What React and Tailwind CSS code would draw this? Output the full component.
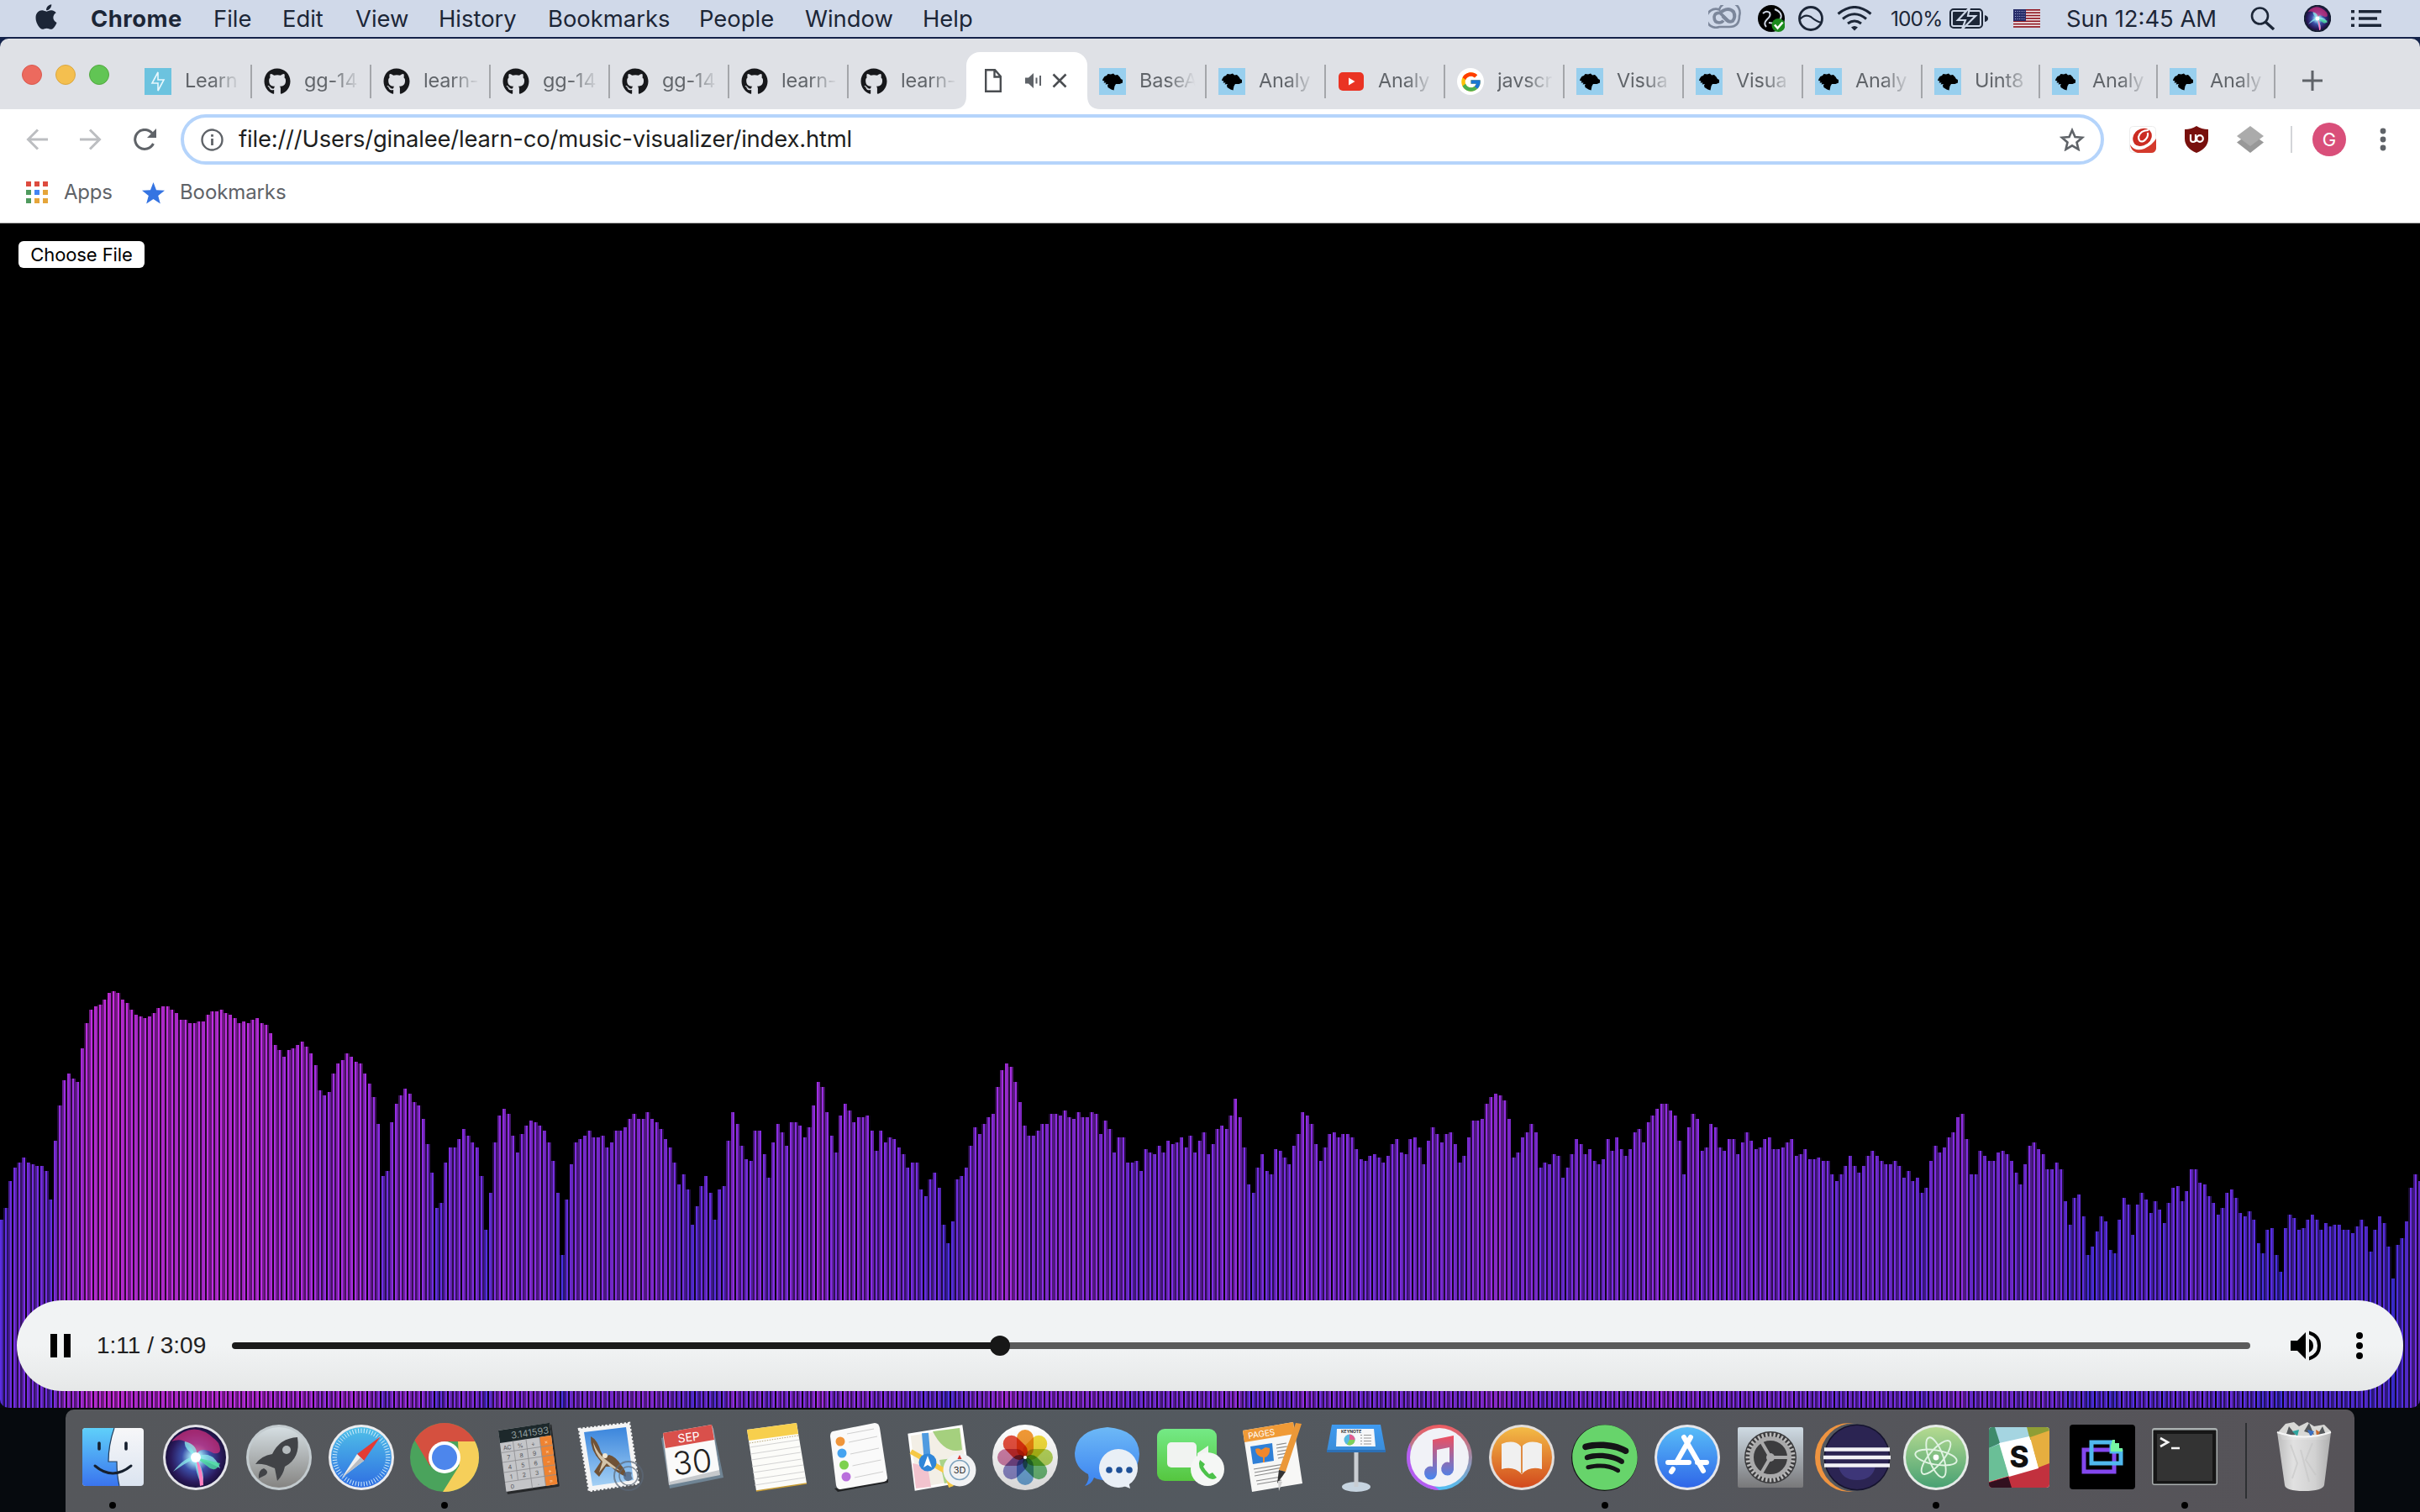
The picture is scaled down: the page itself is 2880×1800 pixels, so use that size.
import React from "react";
import { FaApple, FaGithub, FaSpotify } from "react-icons/fa";
import { FcGoogle } from "react-icons/fc";

/* Top edge of every frequency bar, measured in thirds of a pixel below the analyser's ceiling. */
const LEVELS = [
  876, 834, 738, 690, 673, 655, 673, 679, 685, 685, 703, 805, 595, 469, 379, 354, 373, 384, 264, 175,
  127, 115, 109, 91, 67, 61, 67, 91, 103, 127, 145, 151, 157, 151, 139, 121, 115, 115, 127, 139,
  163, 163, 175, 175, 169, 169, 145, 133, 133, 127, 139, 145, 157, 175, 169, 175, 163, 157, 175, 181,
  211, 253, 271, 295, 271, 265, 253, 241, 259, 283, 325, 415, 433, 421, 355, 319, 307, 283, 295, 313,
  319, 355, 391, 439, 535, 721, 703, 529, 463, 433, 409, 427, 457, 469, 517, 607, 709, 835, 817, 673,
  619, 619, 589, 553, 577, 601, 619, 721, 913, 781, 601, 505, 481, 499, 577, 637, 571, 541, 522, 529,
  541, 559, 601, 667, 781, 1003, 805, 679, 601, 589, 577, 559, 583, 583, 577, 619, 601, 559, 559, 547,
  517, 499, 517, 517, 493, 517, 529, 553, 589, 619, 673, 751, 715, 769, 895, 829, 757, 721, 781, 877,
  769, 757, 595, 493, 535, 613, 661, 667, 559, 559, 643, 727, 601, 535, 565, 613, 529, 529, 541, 583,
  547, 469, 385, 403, 493, 577, 637, 505, 463, 487, 529, 511, 511, 505, 559, 631, 559, 601, 583, 589,
  619, 643, 691, 673, 673, 769, 793, 733, 709, 763, 895, 961, 883, 733, 721, 691, 613, 547, 571, 535,
  511, 499, 403, 343, 319, 331, 385, 457, 541, 577, 577, 559, 535, 535, 499, 499, 505, 487, 511, 517,
  493, 511, 511, 493, 499, 571, 523, 553, 637, 583, 583, 673, 673, 667, 703, 625, 637, 643, 613, 637,
  595, 607, 601, 583, 619, 577, 637, 595, 565, 643, 607, 553, 541, 553, 505, 445, 511, 619, 751, 781,
  691, 643, 703, 715, 625, 631, 655, 679, 613, 571, 493, 505, 535, 607, 667, 619, 571, 565, 583, 571,
  571, 583, 625, 661, 667, 649, 643, 655, 673, 649, 607, 589, 637, 643, 589, 583, 619, 679, 595, 547,
  571, 601, 571, 565, 607, 673, 649, 583, 523, 523, 517, 463, 439, 427, 433, 451, 517, 655, 637, 583,
  565, 535, 565, 691, 673, 679, 643, 649, 727, 691, 643, 589, 607, 643, 625, 667, 679, 661, 589, 631,
  583, 625, 649, 625, 565, 553, 601, 529, 505, 481, 463, 463, 487, 505, 595, 715, 547, 499, 517, 631,
  619, 535, 547, 619, 631, 589, 589, 643, 601, 565, 595, 625, 619, 589, 583, 625, 625, 619, 601, 589,
  649, 643, 625, 661, 661, 655, 667, 667, 715, 739, 715, 685, 649, 685, 709, 685, 649, 631, 649, 667,
  679, 679, 667, 685, 727, 703, 739, 727, 781, 763, 667, 613, 637, 619, 583, 565, 511, 499, 589, 715,
  715, 631, 649, 667, 667, 637, 631, 643, 667, 709, 751, 679, 613, 601, 625, 643, 697, 697, 673, 697,
  811, 895, 799, 787, 865, 1003, 973, 919, 865, 883, 985, 997, 877, 799, 823, 931, 823, 781, 805, 853,
  811, 841, 889, 817, 763, 757, 811, 775, 697, 697, 745, 751, 793, 817, 859, 835, 781, 769, 799, 853,
  865, 847, 877, 961, 997, 913, 907, 1003, 1063, 907, 859, 871, 913, 907, 877, 859, 877, 913, 889, 901,
  895, 895, 913, 913, 925, 901, 877, 901, 991, 913, 865, 889, 973, 1087, 967, 943, 883, 763, 715, 739,
];

const PITCH = 2.67;
const BAR = 1.76;

function Waveform() {
  const rects = [];
  LEVELS.forEach((level, i) => {
    const top = Math.round(level / 3 - 19) / 2;
    const h = 248.5 - top;
    const start = i * PITCH;
    const end = start + BAR;
    for (let x = Math.floor(start); x < end; x++) {
      const cover = Math.min(end, x + 1) - Math.max(start, x);
      if (cover < 0.03) continue;
      rects.push(
        <rect
          key={`${i}-${x}`}
          x={x}
          y={top}
          width="1"
          height={h}
          fill={`rgb(${Math.round(h * 0.82)},46,226)`}
          fillOpacity={cover.toFixed(2)}
        />
      );
    }
  });
  return (
    <svg width="2880" height="497" viewBox="0 0 1440 248.5" shapeRendering="crispEdges" className="block">
      {rects}
    </svg>
  );
}

/* ---------- menu bar ---------- */

const MENUS = [
  ["File", "w-[82px]"],
  ["Edit", "w-[87px]"],
  ["View", "w-[99px]"],
  ["History", "w-[130px]"],
  ["Bookmarks", "w-[180px]"],
  ["People", "w-[126px]"],
  ["Window", "w-[140px]"],
  ["Help", "w-[100px]"],
];

function SiriArt({ id }) {
  return (
    <>
      <defs>
        <radialGradient id={id} cx="50%" cy="50%" r="55%">
          <stop offset="0" stopColor="#ffffff" />
          <stop offset=".16" stopColor="#9fe0f5" />
          <stop offset=".42" stopColor="#3b4fa8" />
          <stop offset=".75" stopColor="#2a1a5c" />
          <stop offset="1" stopColor="#120c30" />
        </radialGradient>
      </defs>
      <circle cx="49" cy="45" r="39" fill="#e3e3e8" />
      <circle cx="49" cy="45" r="36" fill={`url(#${id})`} />
      <path d="M20 26Q48-4 76 28Q82 42 70 40Q52 30 49 45Q40 18 20 26Z" fill="#d4307e" opacity=".7" />
      <path d="M22 62Q36 44 49 44Q34 34 36 26Q52 30 50 44Q70 36 78 58Q64 50 50 46Q62 66 56 78Q48 62 48 46Q36 52 22 62Z" fill="#8ff0ee" opacity=".75" />
      <path d="M49 46Q53 64 54 79L58 78Q58 60 50 46Z" fill="#ff7fc0" />
      <path d="M49 45L78 52Q74 62 66 58Z" fill="#4fe0a0" opacity=".8" />
      <circle cx="49" cy="45" r="6" fill="#fff" />
    </>
  );
}

function MenuBar() {
  return (
    <header className="flex h-11 items-center bg-[#d0d9e9] text-[27.4px] leading-[44px] text-[#1c2637]">
      <FaApple className="ml-[40px] mb-1 h-[34px] w-[30px] shrink-0" />
      <div className="ml-[38px] w-[146px] font-bold tracking-[0.5px]">Chrome</div>
      {MENUS.map(([label, width]) => (
        <div key={label} className={width}>
          {label}
        </div>
      ))}
      <div className="ml-auto flex h-full items-center">
        <svg width="39" height="28" viewBox="0 0 39 28" fill="none" stroke="#7c879b" className="mb-1">
          <path d="M13 5.500A12.500 12.500 0 0 1 37 13Q37 26 25 26H13A11 11 0 1 1 13 5.500Z" strokeWidth="2.600" />
          <path d="M25 20L14 9.500Q8 8.500 7 14Q7 21 13 21Q16 21 18 18.500" strokeWidth="3.600" />
          <path d="M14 9L18 6.500Q25 3 30 8Q33 14 29 19Q25 21 22 18L17 13" strokeWidth="4" />
        </svg>
        <svg width="32" height="32" viewBox="0 0 32 32" className="ml-[20px]">
          <circle cx="16" cy="16" r="16" fill="#000" />
          <path d="M6 10Q10 6 14 9Q16 13 11 17Q6 22 10 26M20 5Q30 9 27 16Q22 23 13 21" fill="none" stroke="#cfd6e4" strokeWidth="2" />
          <circle cx="24.500" cy="24" r="8" fill="#1b8a1e" />
          <path d="M20 23.500L23.500 27.500L29.500 20.500" fill="none" stroke="#fff" strokeWidth="2.600" />
        </svg>
        <svg width="30" height="30" viewBox="0 0 30 30" fill="none" stroke="#1c2637" strokeWidth="2.8" className="ml-[16px]">
          <circle cx="15" cy="15" r="13.500" />
          <path d="M2 16Q8 9 15 13Q22 19 28 20" strokeWidth="2.200" />
        </svg>
        <svg width="42" height="30" viewBox="0 0 42 30" fill="none" stroke="#1c2637" strokeWidth="3" className="ml-[16px]">
          <path d="M1.500 9.500Q21-6.500 40.500 9.500M7 15.500Q21 4 35 15.500M13 21Q21 15 29 21" />
          <path d="M17 25.500Q21 22.500 25 25.500L21 29.500Z" fill="#1c2637" stroke="none" />
        </svg>
        <span className="ml-[22px] w-[70px] text-[24.5px] tracking-[-0.9px]">100%</span>
        <svg width="46" height="24" viewBox="0 0 46 24" className="shrink-0 overflow-visible">
          <rect x="1" y="1" width="38" height="22" rx="4" fill="none" stroke="#1c2637" strokeWidth="2" />
          <rect x="4" y="4" width="32" height="16" rx="1" fill="#1c2637" />
          <path d="M42 8Q46 9 46 12T42 16Z" fill="#1c2637" />
          <path d="M24-1L10 14H19L15 25L31 9H22Z" fill="#1c2637" stroke="#d0d9e9" strokeWidth="2.200" />
        </svg>
        <svg width="32" height="22" viewBox="0 0 32 22" className="ml-[30px]">
          <rect width="32" height="22" fill="#f3eff2" />
          {[0, 1, 2, 3, 4, 5, 6].map((n) => (
            <rect key={n} y={n * 3.35} width="32" height="1.700" fill="#8f1420" />
          ))}
          <rect width="15" height="14" fill="#262c69" />
          {[2, 5, 8, 11].map((y) => (
            <path key={y} d={`M2 ${y + 0.5}H14`} stroke="#aab0d6" strokeDasharray="1 1.600" />
          ))}
        </svg>
        <span className="ml-[31px] w-[219px] whitespace-nowrap">Sun 12:45 AM</span>
        <svg width="30" height="28" viewBox="0 0 30 28" fill="none" stroke="#1c2637" className="shrink-0">
          <circle cx="11.500" cy="11" r="9.500" strokeWidth="2.600" />
          <path d="M18 18L28 27" strokeWidth="3.400" />
        </svg>
        <svg width="32" height="32" viewBox="10 6 78 78" className="ml-[34px]">
          <SiriArt id="siri-s" />
          <circle cx="49" cy="45" r="37" fill="none" stroke="#151d33" strokeWidth="5" />
        </svg>
        <svg width="36" height="20" viewBox="0 0 36 20" className="mr-[46px] ml-[24px]" fill="#1c2637">
          <path d="M0 0H4V3.500H0ZM0 8.200H4V11.700H0ZM0 16.500H4V20H0ZM9 0H36V3.500H9ZM9 8.200H31V11.700H9ZM9 16.500H36V20H9Z" />
        </svg>
      </div>
    </header>
  );
}

/* ---------- tab strip ---------- */

function Favicon({ kind }) {
  if (kind === "github") return <FaGithub className="h-8 w-8 shrink-0 text-[#17181b]" />;
  if (kind === "learn")
    return (
      <svg width="32" height="32" viewBox="0 0 32 32" className="shrink-0">
        <rect width="32" height="32" fill="#6cc3df" />
        <path d="M16 5L9 18H16V27L23 14H16Z" fill="none" stroke="#e8f8fd" strokeWidth="1.600" />
      </svg>
    );
  if (kind === "youtube")
    return (
      <svg width="32" height="32" viewBox="0 0 32 32" className="shrink-0">
        <rect x="1" y="5" width="30" height="22" rx="5" fill="#ea3323" />
        <path d="M13 11.500V20.500L20.500 16Z" fill="#fff" />
      </svg>
    );
  if (kind === "google")
    return (
      <span className="flex h-8 w-8 shrink-0 items-center justify-center rounded-full bg-white">
        <FcGoogle className="h-[27px] w-[27px]" />
      </span>
    );
  return (
    <svg width="32" height="32" viewBox="0 0 32 32" className="shrink-0">
      <rect width="32" height="32" fill="#98cfee" />
      <path d="M4.500 13L6.500 10L9 9L10.500 7L14 7.500L17 6.500L19 8.500L22 8L24.500 10.500L26 13L28 14V17.500L24.500 19L20 19L18.500 21.500L17.500 26.500L14.500 25.500L10.500 23L10 20.500L11 19L7.500 19.500L8.500 17.500L5.500 17.500L6.500 15.500L4 15Z" fill="#000" />
    </svg>
  );
}

function Tab({ kind, title, narrow, bare }) {
  return (
    <div className={`flex h-10 shrink-0 items-center ${narrow ? "w-[140px]" : "w-[142px]"} ${bare ? "" : "border-r-2 border-[#a4a6aa]"} pl-[14px]`}>
      <Favicon kind={kind} />
      <span className="mb-[2px] ml-[16px] w-[74px] shrink-0 bg-linear-to-r from-[#5f6368] from-45% to-[#5f636800] to-90% bg-clip-text text-[23.5px] leading-9 tracking-[-0.2px] whitespace-nowrap text-transparent">
        {title}
      </span>
    </div>
  );
}

const LEFT_TABS = [
  ["learn", "Learn"],
  ["github", "gg-14"],
  ["github", "learn-"],
  ["github", "gg-14"],
  ["github", "gg-14"],
  ["github", "learn-"],
  ["github", "learn-"],
];
const RIGHT_TABS = [
  ["mdn", "BaseA"],
  ["mdn", "Analy"],
  ["youtube", "Analy"],
  ["google", "javscr"],
  ["mdn", "Visua"],
  ["mdn", "Visua"],
  ["mdn", "Analy"],
  ["mdn", "Uint8"],
  ["mdn", "Analy"],
  ["mdn", "Analy"],
];

function TabStrip() {
  return (
    <div className="flex h-[84px] items-end rounded-t-[10px] bg-[#dfe1e6]">
      <div className="mb-[29px] ml-[26px] flex w-[132px] gap-4">
        <span className="h-6 w-6 rounded-full border border-[#d9584e] bg-[#ec6a5e]" />
        <span className="h-6 w-6 rounded-full border border-[#dba73f] bg-[#f4bf4f]" />
        <span className="h-6 w-6 rounded-full border border-[#52a83f] bg-[#61c554]" />
      </div>
      <div className="mb-[13px] flex">
        {LEFT_TABS.map(([kind, title], i) => (
          <Tab key={i} kind={kind} title={title} bare={i === 6} narrow={i === 6} />
        ))}
      </div>
      <div className="-ml-[16px] flex shrink-0 items-end">
        <svg width="16" height="16" viewBox="0 0 16 16">
          <path d="M16 0V16H0Q16 16 16 0Z" fill="#fff" />
        </svg>
        <div className="flex h-[68px] w-[144px] items-center rounded-t-[16px] bg-white pl-[22px]">
          <svg width="20" height="28" viewBox="0 0 20 28" fill="none" stroke="#4a4d51" strokeWidth="2.400">
            <path d="M1.200 1.200H12L18.800 9V26.800H1.200ZM11.500 1.200V9.500H18.800" />
          </svg>
          <svg width="20" height="18" viewBox="0 0 20 18" fill="#5f6368" className="ml-[28px]">
            <path d="M0 5.500H4L10 0V18L4 12.500H0ZM12.500 5.500H14.500V12.500H12.500ZM17 3H19V15H17Z" />
          </svg>
          <svg width="18" height="18" viewBox="0 0 18 18" stroke="#4a4d51" strokeWidth="2.600" className="ml-[12px]">
            <path d="M1.500 1.500L16.500 16.500M16.500 1.500L1.500 16.500" />
          </svg>
        </div>
        <svg width="16" height="16" viewBox="0 0 16 16">
          <path d="M0 0V16H16Q0 16 0 0Z" fill="#fff" />
        </svg>
      </div>
      <div className="mb-[13px] -ml-[16px] flex">
        {RIGHT_TABS.map(([kind, title], i) => (
          <Tab key={i} kind={kind} title={title} narrow={i > 6} />
        ))}
      </div>
      <svg width="24" height="24" viewBox="0 0 24 24" stroke="#5f6368" strokeWidth="3" className="mb-[22px] ml-[32px]">
        <path d="M12 0V24M0 12H24" />
      </svg>
    </div>
  );
}

/* ---------- toolbar ---------- */

function Toolbar() {
  return (
    <div className="flex h-[72px] items-center bg-white">
      <svg width="26" height="26" viewBox="0 0 26 26" fill="none" stroke="#bcbec1" strokeWidth="3" className="ml-[31px]">
        <path d="M26 13H2.500M14 1.500L2.500 13L14 24.500" />
      </svg>
      <svg width="26" height="26" viewBox="0 0 26 26" fill="none" stroke="#bcbec1" strokeWidth="3" className="ml-[38px]">
        <path d="M0 13H23.500M12 1.500L23.500 13L12 24.500" />
      </svg>
      <svg width="28" height="26" viewBox="0 0 28 26" fill="none" stroke="#5f6368" strokeWidth="3" className="ml-[38px]">
        <path d="M23.500 18A11.500 11.500 0 1 1 22 5.500" />
        <path d="M27 0V11H16Z" fill="#5f6368" stroke="none" />
      </svg>
      <div className="ml-[28px] flex h-[60px] w-[2289px] items-center rounded-full border-4 border-[#b5d4fb] bg-white pl-[20px]">
        <svg width="27" height="27" viewBox="0 0 27 27" fill="none" stroke="#5f6368" strokeWidth="2.400">
          <circle cx="13.500" cy="13.500" r="12" />
          <path d="M13.500 12V20M13.500 7V9.800" strokeWidth="2.800" />
        </svg>
        <span className="ml-[18px] text-[27.4px] tracking-[-0.17px] whitespace-nowrap text-[#1d1e20]">
          file:///Users/ginalee/learn-co/music-visualizer/index.html
        </span>
        <svg width="30" height="28" viewBox="0 0 30 28" fill="none" stroke="#5f6368" strokeWidth="2.600" className="mr-[19px] ml-auto">
          <path d="M15 3L18.500 11L27 11.800L20.500 17.400L22.500 25.800L15 21.300L7.500 25.800L9.500 17.400L3 11.800L11.500 11Z" />
        </svg>
      </div>
      <svg width="32" height="32" viewBox="0 0 32 32" className="ml-[30px]">
        <rect x=".5" y=".5" width="31" height="31" rx="4" fill="#fff" stroke="#ececec" />
        <path d="M1 22Q6 31 18 27Q28 22 32 15V27Q31 32 26 32H10Q2 30 1 22Z" fill="#d43a2c" />
        <ellipse cx="15.500" cy="13.500" rx="12" ry="10" transform="rotate(-38 15.500 13.500)" fill="#cb2c22" />
        <path d="M23 5Q13 5 11 13Q11 20 17 18Q23 14 22 8" fill="none" stroke="#fff" strokeWidth="2.200" />
        <path d="M3 20Q8 27 18 24Q27 20 31 12" fill="none" stroke="#fff" strokeWidth="2" />
      </svg>
      <svg width="28" height="32" viewBox="0 0 28 32" className="ml-[34px]">
        <path d="M14 0Q20 4 28 4V15Q28 26 14 32Q0 26 0 15V4Q8 4 14 0Z" fill="#78100d" />
        <path d="M7 10V16Q7 19 10 19T13 16V10M13 10V19" fill="none" stroke="#fff" strokeWidth="2.200" />
        <circle cx="18" cy="15" r="3.800" fill="none" stroke="#fff" strokeWidth="2.200" />
      </svg>
      <svg width="32" height="32" viewBox="0 0 32 32" className="ml-[34px]">
        <path d="M16 8L32 19.500L16 32L0 19.500Z" fill="#989898" />
        <path d="M16 0L32 12L16 24L0 12Z" fill="#ababab" />
      </svg>
      <span className="ml-[32px] h-8 w-[2px] bg-[#d3d5d8]" />
      <span className="ml-[24px] flex h-10 w-10 items-center justify-center rounded-full bg-[#d94f7a] text-[22px] text-white">G</span>
      <svg width="8" height="28" viewBox="0 0 8 28" fill="#5f6368" className="ml-[40px]">
        <circle cx="4" cy="4" r="3.400" />
        <circle cx="4" cy="14" r="3.400" />
        <circle cx="4" cy="24" r="3.400" />
      </svg>
    </div>
  );
}

const APP_DOTS = ["#dd4b3e", "#dd4b3e", "#dd4b3e", "#4f9a5e", "#4285f4", "#e5a53a", "#4f9a5e", "#e5a53a", "#e5a53a"];

function BookmarksBar() {
  return (
    <div className="flex h-[64px] items-start border-b border-[#a9a9a9] bg-white pt-[9px] text-[24px] leading-[36px] text-[#5f6368]">
      <div className="mt-[5px] ml-[31px] grid grid-cols-3 gap-[4px]">
        {APP_DOTS.map((c, i) => (
          <span key={i} className="h-[6px] w-[6px]" style={{ background: c }} />
        ))}
      </div>
      <span className="ml-[19px] w-[93px] tracking-[-0.2px]">Apps</span>
      <svg width="27" height="26" viewBox="0 0 27 26" className="mt-[6px]" fill="#3574e2">
        <path d="M13.500 0L17 9.200L27 9.700L19.200 16L21.800 25.500L13.500 20L5.200 25.500L7.800 16L0 9.700L10 9.200Z" />
      </svg>
      <span className="ml-[18px] tracking-[-0.1px]">Bookmarks</span>
    </div>
  );
}

/* ---------- page ---------- */

function Player() {
  return (
    <div className="absolute bottom-[20px] left-[20px] flex h-[108px] w-[2840px] items-center rounded-full bg-linear-to-b from-[#f1f3f4] from-50% to-[#e6e8e8]">
      <span className="ml-[40px] h-7 w-2 bg-black" />
      <span className="ml-[8px] h-7 w-2 bg-black" />
      <span className="ml-[31px] w-[161px] font-['Liberation_Sans',sans-serif] text-[28px] whitespace-nowrap text-[#202020]">1:11 / 3:09</span>
      <div className="relative flex h-6 w-[2402px] items-center">
        <span className="h-2 w-[914px] rounded-l-full bg-[#1a1a1a]" />
        <span className="h-2 flex-1 rounded-r-full bg-[#5b5b5b]" />
        <span className="absolute left-[902px] h-6 w-6 rounded-full bg-[#171717]" />
      </div>
      <svg width="36" height="36" viewBox="0 0 36 36" className="ml-[48px]">
        <path d="M0 12V24H8L18 34V2L8 12Z" fill="#000" />
        <path d="M22 10V26Q27 23.500 27 18T22 10ZM22 .600V4.800Q32 8 32 18T22 31.200V35.400Q36 31.500 36 18T22 .600Z" fill="#000" />
      </svg>
      <svg width="8" height="32" viewBox="0 0 8 32" className="ml-[42px]">
        <circle cx="4" cy="4" r="4" />
        <circle cx="4" cy="16" r="4" />
        <circle cx="4" cy="28" r="4" />
      </svg>
    </div>
  );
}

/* ---------- dock ---------- */

const grad = (id, a, b) => (
  <linearGradient id={id} x1="0" y1="0" x2="0" y2="1">
    <stop offset="0" stopColor={a} />
    <stop offset="1" stopColor={b} />
  </linearGradient>
);

const ticks = (cx, cy, r1, r2, n) =>
  Array.from({ length: n }, (_, i) => {
    const t = (i * 2 * Math.PI) / n;
    return `M${(cx + r1 * Math.cos(t)).toFixed(1)} ${(cy + r1 * Math.sin(t)).toFixed(1)}L${(cx + r2 * Math.cos(t)).toFixed(1)} ${(cy + r2 * Math.sin(t)).toFixed(1)}`;
  }).join("");

const PETALS = ["#f39a35", "#f2dc3c", "#b5d45b", "#6dbb78", "#6fa9da", "#8b88c8", "#cf7fa8", "#e5503e"];
const CALC = [["AC", "%", "÷", "×"], ["7", "8", "9", "×"], ["4", "5", "6", "−"], ["1", "2", "3", "+"], ["0", "", ".", "="]];

const ICONS = [
  <g key="finder">
    <defs>{grad("fa", "#5fd0fa", "#3a74ee")}{grad("fb", "#f7f7f9", "#dbe4f0")}</defs>
    <rect x="13" y="10" width="73" height="69" rx="4" fill="url(#fb)" />
    <path d="M17 10H51Q45 28 44 50H54Q54 66 57 79H17Q13 79 13 75V14Q13 10 17 10Z" fill="url(#fa)" />
    <path d="M51 10Q44 30 44 50H54Q54 66 57 79" fill="none" stroke="#25405e" strokeWidth="1.200" />
    <path d="M33 28V35M65 28V35" stroke="#16202e" strokeWidth="3.600" strokeLinecap="round" />
    <path d="M28 55Q49 73 71 55" fill="none" stroke="#16202e" strokeWidth="3" strokeLinecap="round" />
  </g>,
  <SiriArt key="siri" id="siri-l" />,
  <g key="launchpad">
    <defs>{grad("la", "#d5dee2", "#858482")}</defs>
    <circle cx="49" cy="45" r="39" fill="#c3cbcf" />
    <circle cx="49" cy="45" r="36" fill="url(#la)" />
    <path d="M71 21Q75 46 56 56Q54 66 47 73L44 58L34 54Q25 52 21 53Q28 43 41 41Q50 22 71 21Z" fill="#414347" />
    <circle cx="58" cy="36" r="5" fill="#b5bbbe" />
    <path d="M25 70Q24 60 31 58Q38 62 33 66Z" fill="#414347" />
  </g>,
  <g key="safari">
    <defs>{grad("sa", "#4fc0e8", "#2f6ee2")}</defs>
    <circle cx="49" cy="45" r="39" fill="#ececee" />
    <circle cx="49" cy="45" r="36" fill="url(#sa)" />
    <path d={ticks(49, 45, 29, 34.5, 60)} stroke="#d6eefb" strokeWidth="1" />
    <path d="M72 20L44 41L52 49Z" fill="#e33b34" />
    <path d="M26 69L44 41L52 49Z" fill="#f0f0f0" />
    <path d="M26 69L48 45L52 49Z" fill="#b8bcc2" />
  </g>,
  <g key="chrome">
    <circle cx="49" cy="45" r="41" fill="#4aa35c" />
    <path d="M13.500 24.500A41 41 0 0 1 84.500 24.500L85 26H49L31.500 55Z" fill="#d5503f" />
    <path d="M84.500 24.500A41 41 0 0 1 47 86L66.500 55L65 26H85Z" fill="#f6cf5a" />
    <circle cx="49" cy="45" r="19" fill="#fff" />
    <circle cx="49" cy="45" r="15" fill="#4d86ec" />
  </g>,
  <g key="calculator" transform="matrix(1 -.15 .13 1 14 13)">
    <rect x="1" y="2" width="62" height="74" rx="1" fill="#26282a" />
    <rect width="61" height="73" rx="1" fill="#c4c5c8" />
    <rect width="61" height="15" fill="#1d282b" />
    <rect x="47" y="15" width="14" height="58" fill="#ef8331" />
    <path d="M0 26.500H61M0 38H61M0 50H61M0 61.500H61M15.500 15V61.500M31 15V73M47 15V73" stroke="#8f8f92" strokeWidth=".8" />
    <text x="59" y="12" fontSize="11" textAnchor="end" fill="#8d9b9c">3.141593</text>
    {CALC.map((row, r) => row.map((c, k) => (
      <text key={`${r}${k}`} x={8 + k * 15.4} y={24 + r * 11.6} fontSize="7" textAnchor="middle" fill={k === 3 ? "#fbd2ae" : "#55565a"}>{c}</text>
    )))}
  </g>,
  <g key="mail">
    <defs>{grad("ma", "#3a85dc", "#a4d0f4")}</defs>
    <path d="M12 11L72 4L83 76L24 85Z" fill="#f5f5f5" stroke="#f5f5f5" strokeWidth="2.500" strokeDasharray="2.500 2" />
    <path d="M18 15L68 9L77 72L28 79Z" fill="url(#ma)" />
    <path d="M26 20Q34 24 38 38Q42 46 48 42Q56 44 62 54Q68 60 68 68Q58 64 50 56L44 56L36 68L30 62L38 50Q25 36 26 20Z" fill="#6f5236" />
    <path d="M29 27Q34 40 43 47L61 61Q50 58 45 52L36 63L40 50Q30 40 29 27Z" fill="#d3c3a8" />
    <circle cx="43" cy="43" r="3" fill="#f0e6d2" />
    <circle cx="71" cy="67" r="17" fill="none" stroke="#5b6878" strokeWidth="2" opacity=".7" />
    <circle cx="71" cy="67" r="11" fill="none" stroke="#5b6878" strokeWidth="1.500" opacity=".7" />
    <path d="M66 63Q71 61 75 63Q73 67 76 70Q71 76 66 71Q64 67 66 63Z" fill="#4f6380" opacity=".8" />
  </g>,
  <g key="calendar">
    <path d="M11 22L73 10L85 69L21 82Z" fill="#6f8494" />
    <path d="M13 20L72 8L81 66L20 78Z" fill="#c6c9cc" />
    <path d="M13 16L71 6L80 60L21 74Z" fill="#fafafa" />
    <path d="M13 16L71 6L74 24L16 34Z" fill="#d9504b" />
    <text x="44" y="26" fontSize="14" textAnchor="middle" fill="#fff" transform="rotate(-8 44 24)">SEP</text>
    <text x="48" y="64" fontSize="38" fontWeight="300" textAnchor="middle" fill="#222" transform="rotate(-6 48 50)">30</text>
  </g>,
  <g key="notes">
    <path d="M15 12L74 4L86 76L26 85Z" fill="#fcfcf9" />
    <path d="M26 85L86 76" stroke="#c99d33" strokeWidth="1.500" />
    <path d="M15 12L74 4L76 17L17 25Z" fill="#f7cf4d" />
    <path d="M18 33L77 24M19 41L78 32M20 48L79 39M21 56L80 47M22 63L82 54M23 71L83 62M24 78L84 69" stroke="#d3d3d3" />
    <path d="M18 28L76 19" stroke="#b8a678" strokeDasharray="1.500 1.500" />
  </g>,
  <g key="reminders">
    <path d="M20 82L84 71L84 75L24 86Z" fill="#222426" />
    <path d="M18 14L68 4Q73 4 74 10L83 69Q83 73 79 74L27 83Q23 83 22 78L15 20Q15 15 18 14Z" fill="#fafafa" />
    {[["#f0953a", 27, 30], ["#45a3f0", 29, 44], ["#7dd14e", 31.5, 58], ["#b96fdc", 34, 72]].map(([c, x, y]) => (
      <g key={c}>
        <circle cx={x} cy={y - 4} r="5.500" fill={c} />
        <path d={`M${x + 10} ${y - 3}L${x + 44} ${y - 10}`} stroke="#cfcfcf" />
      </g>
    ))}
    <path d="M35 17L67 11" stroke="#cfcfcf" />
  </g>,
  <g key="maps">
    <path d="M10 18L72 8L81 72L18 83Z" fill="#f3efe6" stroke="#fff" strokeWidth="3" />
    <path d="M38 14L70 10L73 36Q52 42 38 14Z" fill="#a5d07e" />
    <path d="M46 48L78 44L80 70L52 76Z" fill="#a9d389" />
    <path d="M12 38L54 62L60 80" fill="none" stroke="#f6c945" strokeWidth="6" />
    <path d="M14 52L32 56L36 80L18 82Z" fill="#f2c3ce" />
    <path d="M29 16L32 51" stroke="#4f9be0" strokeWidth="8" />
    <circle cx="32" cy="51" r="10.500" fill="#2f86d9" />
    <path d="M32 43L37 57L32 54L27 57Z" fill="#fff" />
    <circle cx="70" cy="60" r="19.500" fill="#f1f2f3" />
    <circle cx="70" cy="60" r="11.500" fill="none" stroke="#7ba0bc" strokeWidth="1.500" />
    <text x="70" y="64" fontSize="11" textAnchor="middle" fill="#333">3D</text>
    <path d="M67.500 47L70 42L72.500 47Z" fill="#d93630" />
  </g>,
  <g key="photos" className="isolate">
    <defs>{grad("ph", "#ffffff", "#d6d6d6")}</defs>
    <circle cx="50" cy="45" r="39" fill="url(#ph)" />
    {PETALS.map((c, i) => (
      <rect key={c} x="40" y="12" width="20" height="33" rx="10" fill={c} className="mix-blend-multiply" transform={`rotate(${i * 45} 50 45)`} />
    ))}
    <circle cx="50" cy="45" r="2" fill="#fff" />
  </g>,
  <g key="messages">
    <defs>{grad("me", "#6db9f7", "#3b82f0")}</defs>
    <path d="M49 9Q86 12 87 41Q86 70 52 73Q38 72 33 69Q30 77 22 79Q28 72 26 65Q10 57 10 40Q12 12 49 9Z" fill="url(#me)" />
    <circle cx="62" cy="60" r="23" fill="#e9eff6" transform="translate(0 -2)" />
    <path d="M66 78L76 82L74 74Z" fill="#e9eff6" />
    <circle cx="51" cy="60" r="3.800" fill="#1f5198" />
    <circle cx="63" cy="60" r="3.800" fill="#1f5198" />
    <circle cx="75" cy="60" r="3.800" fill="#1f5198" />
  </g>,
  <g key="facetime">
    <defs>{grad("ft", "#74ea86", "#55c63f")}</defs>
    <rect x="9" y="11" width="71" height="62" rx="9" fill="url(#ft)" />
    <rect x="21" y="27" width="35" height="30" rx="5" fill="#f1f3f1" />
    <path d="M57 40L70 31V53L57 46Z" fill="#f1f3f1" />
    <circle cx="69" cy="59" r="20" fill="#f5f7f5" />
    <path d="M60 48Q56 56 66 66Q74 74 80 69L75 63L71 65Q66 60 64 56L66 53Z" fill="#4cc24a" />
  </g>,
  <g key="pages">
    <path d="M13 13L73 3L84 76L24 86Z" fill="#f7f7f6" />
    <path d="M13 13L73 3L75 17L15 27Z" fill="#f09a36" />
    <text x="20" y="23" fontSize="10" fill="#fff" transform="rotate(-9 20 23)">PAGES</text>
    <path d="M22 32L48 28L50 49L25 53Z" fill="#2f7fd6" />
    <path d="M28 35Q32 33 35 36L40 33L45 34Q46 43 39 45L39 51L37 51V45Q28 43 28 35Z" fill="#f0872c" />
    <path d="M53 30L65 28M53 34L66 32M54 38L66 36M54 42L65 40M55 46L64 44M26 59L62 53M27 63L61 57M27 67L60 61M29 73L59 68M30 77L59 72" stroke="#8a8a8a" strokeWidth="1.200" />
    <path d="M76 4L83 5L64 62L56 60Z" fill="#eb9838" />
    <path d="M64 62L56 60L54 76Z" fill="#333" />
    <path d="M60 74L56 85L55 73Z" fill="#d0d0d0" />
  </g>,
  <g key="keynote">
    <defs>{grad("kn", "#3f9af0", "#3a8cd8")}</defs>
    <ellipse cx="49" cy="80" rx="17" ry="6" fill="#c6d4e0" />
    <rect x="46.500" y="38" width="5" height="42" fill="#c9cdd2" />
    <path d="M20 6H78L84 38H14Z" fill="url(#kn)" />
    <rect x="14" y="36" width="70" height="3" fill="#2c70b5" />
    <path d="M26 11H70L72 32H25Z" fill="#f6f7f9" />
    <text x="31" y="16" fontSize="5" fontWeight="700" fill="#333">KEYNOTE</text>
    <circle cx="41" cy="24" r="6.500" fill="#56b9e0" />
    <path d="M41 24V17.500A6.500 6.500 0 0 1 47.500 24Z" fill="#e25b8f" />
    <path d="M41 24H47.500A6.500 6.500 0 0 1 38 29.800Z" fill="#7fcf5a" />
    <path d="M54 18.500H67M54 22H67M54 25.500H67M54 29H67" stroke="#999" strokeDasharray="2 2 10" />
  </g>,
  <g key="itunes">
    <defs>
      {grad("it", "#ef5a5f", "#4fc0f5")}
      {grad("ic", "#f04e5e", "#4585f0")}
    </defs>
    <circle cx="49" cy="45" r="39" fill="url(#it)" />
    <path d="M49 84A39 39 0 0 1 14 28Q16 60 49 84Z" fill="#b45cf0" />
    <circle cx="49" cy="45" r="35" fill="#f1f2f7" />
    <path d="M41 24L66 19V57A7.500 8 0 1 1 61 51V33L46 36V63A7.500 8 0 1 1 41 56Z" fill="url(#ic)" />
  </g>,
  <g key="books">
    <defs>{grad("bk", "#f3bb46", "#d2491d")}</defs>
    <circle cx="49" cy="45" r="39" fill="#e2dedc" />
    <circle cx="49" cy="45" r="36" fill="url(#bk)" />
    <path d="M48 32Q40 23 25 29V59Q40 55 49 65Q58 55 73 59V29Q58 23 49 32Z" fill="#f0f0f0" />
    <path d="M49 31V64" stroke="#dd8130" strokeWidth="1.800" />
  </g>,
  null,
  <g key="appstore">
    <defs>{grad("as", "#58bdf8", "#2f66e8")}</defs>
    <circle cx="49" cy="45" r="39" fill="#e6e6ea" />
    <circle cx="49" cy="45" r="36" fill="url(#as)" />
    <path d="M45 21L68 61M53 21L36 51M26 51H51M61 51H72M32 59L30 62" stroke="#fff" strokeWidth="6" strokeLinecap="round" />
  </g>,
  <g key="prefs">
    <defs>{grad("pr", "#cfdbe4", "#78787a")}</defs>
    <rect x="10" y="9" width="78" height="72" rx="2" fill="url(#pr)" />
    <circle cx="49" cy="45" r="31" fill="#3c3c3e" />
    <path d={ticks(49, 45, 24, 29.5, 36)} stroke="#bcbcbc" strokeWidth="2.500" />
    <circle cx="49" cy="45" r="22.500" fill="none" stroke="#a9a9aa" strokeWidth="5" />
    <path d="M49 45L38 26M49 45H71M49 45L38 64" stroke="#a9a9aa" strokeWidth="4" />
    <circle cx="49" cy="45" r="5" fill="#a9a9aa" />
  </g>,
  <g key="eclipse">
    <circle cx="44" cy="45" r="41" fill="#ef9440" />
    <circle cx="50" cy="45" r="41" fill="#54585e" />
    <circle cx="53" cy="45" r="39.500" fill="#15132e" />
    <circle cx="53" cy="45" r="38" fill="#2b2452" />
    <path d="M31 55H75Q72 72 53 72T31 55Z" fill="#3d3678" />
    <path d="M14 35.500H92M13 45H93M14 54.500H92" stroke="#f2f2f6" strokeWidth="4.600" />
  </g>,
  <g key="atom">
    <defs>{grad("at", "#b5da90", "#48a173")}</defs>
    <circle cx="49" cy="45" r="39" fill="#e6ebe8" />
    <circle cx="49" cy="45" r="36" fill="url(#at)" />
    <g fill="none" stroke="#e0f3e2" strokeWidth="1.900">
      <ellipse cx="49" cy="45" rx="25" ry="8.500" transform="rotate(10 49 45)" />
      <ellipse cx="49" cy="45" rx="25" ry="8.500" transform="rotate(70 49 45)" />
      <ellipse cx="49" cy="45" rx="25" ry="8.500" transform="rotate(-50 49 45)" />
    </g>
    <circle cx="49" cy="45" r="3.400" fill="#fff" />
  </g>,
  <g key="slack">
    <clipPath id="sl"><rect x="13" y="9" width="72" height="72" rx="4" /></clipPath>
    <g clipPath="url(#sl)">
      <rect x="13" y="9" width="72" height="72" fill="#fff" />
      <path d="M13 9H58L62 20L13 34Z" fill="#a5d5e1" />
      <path d="M13 9H20L26 28L13 34Z" fill="#3e8a6b" />
      <path d="M13 34L26 29L37 67L13 74Z" fill="#6abf97" />
      <path d="M58 9H85V18L62 24Z" fill="#8f9e35" />
      <path d="M62 21L85 13V55L72 59Z" fill="#e6ae3f" />
      <path d="M13 74L72 57L85 52V81H13Z" fill="#c2313e" />
      <path d="M13 75L36 68L40 81H13Z" fill="#32101f" />
      <path d="M25 28L61 20L72 58L37 68Z" fill="#fff" />
    </g>
    <text x="49" y="57" fontSize="35" fontWeight="800" textAnchor="middle" fill="#111">S</text>
  </g>,
  <g key="frames">
    <rect x="10" y="6" width="78" height="77" rx="4" fill="#000" />
    <rect x="27" y="36" width="36" height="26" fill="none" stroke="#8347ee" strokeWidth="5" />
    <path d="M36 27H60V38H71V52H36Z" fill="none" stroke="#50b8ee" strokeWidth="5" />
    <path d="M61 24H64V28H69V34H73V38H59V31Z" fill="#76f5a2" />
  </g>,
  <g key="terminal">
    <rect x="10" y="10" width="78" height="68" rx="3" fill="#aab0b0" />
    <rect x="11.500" y="12.500" width="75" height="64" rx="1" fill="#161616" />
    <rect x="16" y="17" width="66" height="56" fill="#333" />
    <path d="M20 22L29 27L20 32M33 34H43" fill="none" stroke="#f5f5f5" strokeWidth="2.600" />
  </g>,
];

const RUNNING = new Set([0, 4, 18, 22, 25]);

function Dock() {
  return (
    <div className="ml-[78px] flex h-[122px] w-[2724px] rounded-t-[10px] bg-linear-to-r from-[#55575b] via-[#53595f] to-[#565358] pt-[12px] pl-[7px]">
      {ICONS.map((art, i) => (
        <div key={i} className="flex w-[98.65px] shrink-0 flex-col items-center">
          {art ? (
            <svg width="98" height="90" viewBox="0 0 98 90" className="shrink-0">{art}</svg>
          ) : (
            <div className="flex h-[90px] items-center">
              <div className="flex h-[79px] w-[79px] items-center justify-center rounded-full bg-[#141416]">
                <FaSpotify className="h-[80px] w-[80px] shrink-0 text-[#67d46b]" />
              </div>
            </div>
          )}
          {RUNNING.has(i) && <span className="mt-[8px] h-2 w-2 rounded-full bg-black" />}
        </div>
      ))}
      <span className="mt-[4px] ml-[22px] h-[90px] w-[2px] bg-[#2e3033]" />
      <svg width="70" height="90" viewBox="0 0 70 90" className="ml-[34px]">
        <defs>
          <linearGradient id="tr" x1="0" y1="0" x2="1" y2="0">
            <stop offset="0" stopColor="#c2c2c2" />
            <stop offset=".3" stopColor="#e8e8e8" />
            <stop offset=".7" stopColor="#d8d8d8" />
            <stop offset="1" stopColor="#b3b3b3" />
          </linearGradient>
        </defs>
        <path d="M4 14L12 5L22 3L28 8L38 3L46 8L58 6L66 14L62 24H8Z" fill="#d8d8d6" />
        <path d="M16 8L24 18L12 20ZM40 4L46 18L34 14ZM56 8L60 18L50 18Z" fill="#55595c" />
        <path d="M20 14L28 12L26 20Z" fill="#2fa6a0" />
        <path d="M38 12L46 14L42 21Z" fill="#3b6fc0" />
        <path d="M48 12L53 15L49 20Z" fill="#c46a32" />
        <path d="M2 15Q34 27 66 15L58 78Q56 85 34 85T11 78Z" fill="url(#tr)" opacity=".95" />
        <path d="M2 15Q34 26 66 15" fill="none" stroke="#f6f6f6" strokeWidth="2" />
        <path d="M18 30L26 52L20 70M44 28L36 48L48 66M30 36L40 74" fill="none" stroke="#c4c4c4" strokeWidth="2" opacity=".6" />
      </svg>
    </div>
  );
}

export default function App() {
  return (
    <div className="flex h-[1800px] w-[2880px] flex-col overflow-hidden bg-[#060a0e] font-['Inter',sans-serif]">
      <MenuBar />
      <div className="h-[1632px] bg-linear-to-b from-[#14234a] from-2% to-[#060a0e] to-10% pt-[2px]">
        <TabStrip />
        <Toolbar />
        <BookmarksBar />
        <main className="relative flex h-[1410px] flex-col justify-between overflow-hidden rounded-b-[10px] bg-black">
          <button className="mt-[21px] ml-[22px] h-8 w-[150px] rounded-[6px] bg-white text-[22px] leading-8 tracking-[-0.1px] whitespace-nowrap text-black">
            Choose File
          </button>
          <Waveform />
          <Player />
        </main>
      </div>
      <div className="h-[2px] shrink-0 bg-[#060708]" />
      <Dock />
    </div>
  );
}
